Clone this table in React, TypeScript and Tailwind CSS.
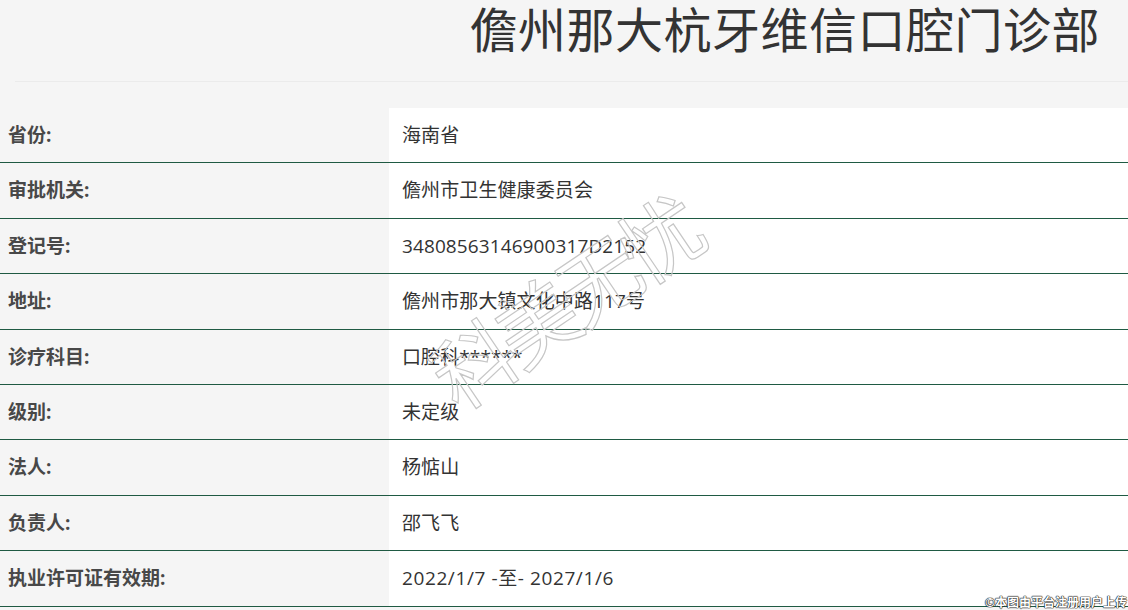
const rows: [string, string][] = [
  ['省份:', '海南省'],
  ['审批机关:', '儋州市卫生健康委员会'],
  ['登记号:', '3480856314690031 7D2152'.replace(' ', '')],
  ['地址:', '儋州市那大镇文化中路117号'],
  ['诊疗科目:', '口腔科******'],
  ['级别:', '未定级'],
  ['法人:', '杨惦山'],
  ['负责人:', '邵飞飞'],
  ['执业许可证有效期:', '2022/1/7 -至- 2027/1/6'],
]

export default function App() {
  return (
    <div
      className="relative w-[1128px] h-[610px] overflow-hidden bg-[#f5f5f5]"
      style={{ fontFamily: '"Open Sans", "Noto Sans CJK SC", sans-serif' }}
    >
      <div className="ml-[15px] h-[82px] border-b border-[#ebebeb] flex justify-end items-start pr-[28px]">
        <h1 className="text-[48px] leading-none mt-[6px] text-[#333] font-normal tracking-[0.5px] whitespace-nowrap">
          儋州那大杭牙维信口腔门诊部
        </h1>
      </div>

      <div className="mt-[26px]">
        {rows.map(([label, value], i) => (
          <div key={i} className="flex h-[55.4px] border-b border-[#1f5a43]">
            <div className="w-[389px] flex items-center pl-[8px] text-[19px] font-bold text-[#484848]">
              {label}
            </div>
            <div
              className={
                i === rows.length - 1
                  ? 'flex-1 bg-white flex items-center pl-[13px] text-[19px] text-[#333] tracking-[0.6px] whitespace-pre'
                  : 'flex-1 bg-white flex items-center pl-[13px] text-[19px] text-[#333] tracking-[0.1px] whitespace-pre'
              }
            >
              {value}
            </div>
          </div>
        ))}
      </div>

      <div
        className="absolute left-[413px] top-[259px] text-[82px] leading-none text-transparent tracking-[-7px] -rotate-[34deg] [-webkit-text-stroke:1.2px_#c6c6c6] select-none pointer-events-none"
        style={{ fontFamily: '"Noto Sans CJK SC", sans-serif' }}
      >
        科美无忧
      </div>

      <div className="absolute right-[1px] bottom-[1px] text-[12px] leading-none text-white font-bold [text-shadow:0_0_1px_#222,0_0_1px_#222,0_0_1px_#222,0_0_1px_#222]">
        ©本图由平台注册用户上传
      </div>
    </div>
  )
}
